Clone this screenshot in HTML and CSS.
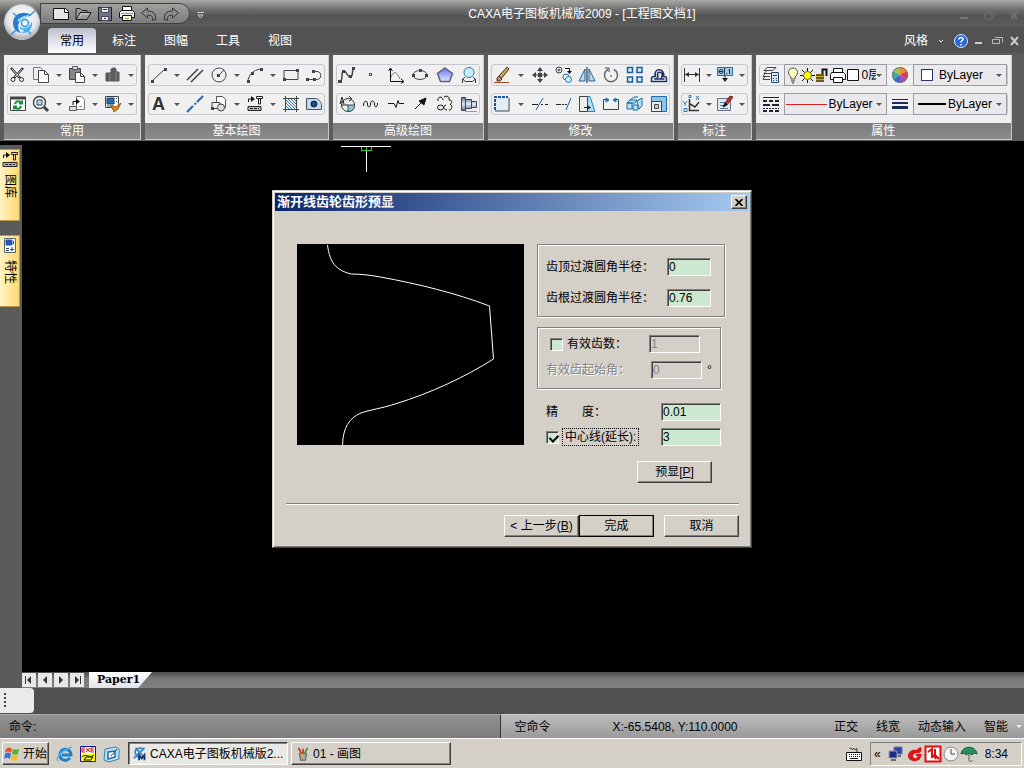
FILE: index.html
```html
<!DOCTYPE html>
<html lang="zh-CN">
  <head>
    <meta charset="UTF-8" />
    <meta name="viewport" content="width=device-width, initial-scale=1.0" />
    <title>CAXA电子图板机械版2009</title>
    <link rel="stylesheet" href="styles.css">
  </head>
  <body>
    <header class="titlebar">
      <button class="app-button" aria-label="菜单">
        <svg width="36" height="36" viewBox="0 0 36 36">
          <defs>
            <radialGradient id="orb" cx=".5" cy=".4" r=".6">
              <stop offset="0" stop-color="#fff" />
              <stop offset=".7" stop-color="#e4e6ea" />
              <stop offset="1" stop-color="#a4a8ae" />
            </radialGradient>
          </defs>
          <circle cx="18" cy="18" r="17.5" fill="url(#orb)" stroke="#c8c8c8" />
          <path d="M9 9l7 6M21 24l6 6M31 7l-6 5M13 25l-6 6" fill="none" stroke="#3a94dc" stroke-width="1.500" />
          <path d="M27 11c-8-5-18-1-18 8 0 5 3 9 8 10-3-3-4-8-1-12 3-3 7-4 11-6z" fill="#2a7ccc" />
          <path d="M25 12c-4 1-8 1-11 5" fill="none" stroke="#9cdcff" stroke-width="2" />
          <path d="M17 29c8 1 12-5 11-12-1 4-4 7-7 7-3 1-5-1-5-3-1 3 1 5 4 5 0 1-1 2-3 3z" fill="#4ab0ee" />
          <circle cx="21" cy="19" r="3.500" fill="#e8f6ff" stroke="#3a94dc" stroke-width="1.500" />
        </svg>
      </button>
      <div class="quick">
        <button class="tool" aria-label="新建"><svg class="icon" viewBox="0 0 20 20"><path d="M2.500 4.500h12l3 3v8h-15z" fill="#e8e8e8" stroke="#111" /><path d="M13.500 4.500v4h4" fill="#fff" stroke="#111" /></svg></button>
        <button class="tool" aria-label="打开"><svg class="icon" viewBox="0 0 20 20"><path d="M3 15V4.500h4l2 2h5v2M3 15.500l4-7h11l-4 7z" fill="#999" stroke="#222" /><path d="M6.500 13l2-3H16" stroke="#ddd" /></svg></button>
        <button class="tool" aria-label="保存"><svg class="icon" viewBox="0 0 20 20"><path d="M3.500 3.500h13v13h-13z" fill="#6c7488" stroke="#222" /><path d="M6.500 3.500h7v5h-7zM6.500 12.500h7v4h-7z" fill="#e8e8ee" stroke="#445" /><path d="M8 5.500h4M9 14.500h2" stroke="#333" /></svg></button>
        <button class="tool" aria-label="打印"><svg class="icon" viewBox="0 0 20 20"><path d="M5.500 7V2.500h9V7" fill="#fff" stroke="#111" /><path d="M4.500 6.500h11l2 2v5h-15v-5z" fill="#eee" stroke="#111" /><path d="M5.500 11.500h9v5h-9z" fill="#fff" stroke="#111" /><path d="M4 9.500h12" stroke="#999" /><path d="M8 14.500h4" stroke="#b90" /></svg></button>
        <button class="tool" aria-label="撤消"><svg class="icon" viewBox="0 0 20 20"><path d="M2.500 9l6-5v3c6 0 9 3 8 9h-3c1-3-1-5-5-5v3z" fill="#8c8c8c" stroke="#333" /></svg></button>
        <button class="tool" aria-label="恢复"><svg class="icon" viewBox="0 0 20 20"><path d="M17.500 9l-6-5v3c-6 0-9 3-8 9h3c-1-3 1-5 5-5v3z" fill="#8c8c8c" stroke="#333" /></svg></button>
      </div>
      <button class="quick-more" aria-label="自定义"><svg class="icon" viewBox="0 0 20 20"><path d="M7 8.500h7M8 11h5l-2.500 3z" stroke="#ccc" /></svg></button>
      <h1 class="title">CAXA电子图板机械版2009 - [工程图文档1]</h1>
      <div class="win-buttons">
        <button aria-label="最小化"><svg class="icon" viewBox="0 0 20 20"><path d="M6 14h8" stroke="#777" stroke-width="2" /></svg></button>
        <button aria-label="还原"><svg class="icon" viewBox="0 0 20 20"><path d="M8 7h7v6M6 9h7v6H6z" stroke="#707070" /></svg></button>
        <button aria-label="关闭"><svg class="icon" viewBox="0 0 20 20"><path d="M7 8l6 7M13 8l-6 7" stroke="#707070" stroke-width="2" /></svg></button>
      </div>
    </header>

    <nav class="tabs">
      <button class="tab tab_active">常用</button>
      <button class="tab">标注</button>
      <button class="tab">图幅</button>
      <button class="tab">工具</button>
      <button class="tab">视图</button>
      <div class="tabs-right">
        <button class="style-menu">风格</button>
        <svg class="icon" viewBox="0 0 20 20"><path d="M7 9l2 2 2-2" stroke="#eee" /></svg>
        <button class="mini" aria-label="帮助"><svg width="16" height="16" viewBox="0 0 16 16"><circle cx="8" cy="8" r="6.500" fill="#2868d8" stroke="#dce8ff" /><path d="M6 6.500c0-3 4.500-2.500 4 0C9.700 7.800 8 7.700 8 9.500M8 11v1.500" fill="none" stroke="#fff" stroke-width="1.600" /></svg></button>
        <button class="mini" aria-label="最小化文档"><svg class="icon" viewBox="0 0 20 20"><path d="M6 12h7" stroke="#ccc" stroke-width="2" /></svg></button>
        <button class="mini" aria-label="还原文档"><svg class="icon" viewBox="0 0 20 20"><path d="M8 6.500h7.500v5M5.500 8.500h7v4h-7z" stroke="#bbb" /></svg></button>
        <button class="mini" aria-label="关闭文档"><svg class="icon" viewBox="0 0 20 20"><path d="M6 6l7 8M13 6l-7 8" stroke="#ccc" stroke-width="2" /></svg></button>
      </div>
    </nav>

    <section class="ribbon">
      <div class="panel panel-common">
        <div class="panel-body">
          <div class="row">
            <button class="tool" aria-label="剪切"><svg class="icon" viewBox="0 0 20 20"><path d="M3 3l9 10M15 3L6 13" stroke="#333" stroke-width="2.500" /><path d="M4 4l7 8M14 4l-7 8" stroke="#ccc" /><circle cx="5" cy="14.500" r="2" stroke="#333" /><circle cx="13.500" cy="14.500" r="2" stroke="#333" /></svg></button>
            <button class="tool" aria-label="复制"><svg class="icon" viewBox="0 0 20 20"><path d="M2.500 2.500h7l2 2v10h-9z" fill="#eee" stroke="#777" /><path d="M7.500 5.500h6l4 4v8h-10z" fill="#fff" stroke="#444" /><path d="M13.500 5.500v4h4" stroke="#444" /></svg></button>
            <button class="drop" aria-label="更多"></button>
            <button class="tool" aria-label="粘贴"><svg class="icon" viewBox="0 0 20 20"><path d="M2.500 3.500h11v11h-11z" fill="#868686" stroke="#444" /><path d="M5.500 1.500h5v3h-5z" fill="#ddd" stroke="#555" /><path d="M8.500 7.500h5l4 4v6h-9z" fill="#fff" stroke="#444" /><path d="M13.500 7.500v4h4" stroke="#444" /></svg></button>
            <button class="drop" aria-label="更多"></button>
            <button class="tool" aria-label="统计"><svg class="icon" viewBox="0 0 20 20"><path d="M3 8h4l1-1V4l2-1h2l1 1v3h3v9H3z" fill="#5c5c5c" stroke="#555" /><path d="M7 8v8M13 7v9" stroke="#888" /></svg></button>
            <button class="drop" aria-label="更多"></button>
          </div>
          <div class="row">
            <button class="tool" aria-label="重生成"><svg class="icon" viewBox="0 0 20 20"><path d="M2.500 3.500h15v13h-15z" fill="#fff" stroke="#444" /><path d="M2 4h16" stroke="#444" stroke-width="3" /><path d="M7 10c1-4 5-3 6-1M14 6.500v3h-3M13 12c-1 4-5 3-6 1M6 15.500v-3h3" stroke="#1c9040" stroke-width="2" /></svg></button>
            <button class="tool" aria-label="缩放"><svg class="icon" viewBox="0 0 20 20"><circle cx="8.500" cy="8.500" r="6" fill="#f4f8ff" stroke="#444" stroke-width="1.500" /><path d="M6 6h5v5H6z" stroke="#345" fill="#bcd8ee" /><path d="M13 13l4 4" stroke-width="3" /></svg></button>
            <button class="drop" aria-label="更多"></button>
            <button class="tool" aria-label="插入"><svg class="icon" viewBox="0 0 20 20"><path d="M9.500 2.500h5l3 3v10h-8z" fill="#fff" stroke="#777" /><path d="M2.500 12.500h7v4h-7z" fill="#ddd" stroke="#555" /><path d="M6 11V7.500h4" stroke="#111" /><path d="M9 4.500l4 3-4 3z" fill="#111" stroke="none" /><path d="M12 12.500h3" stroke="#888" /></svg></button>
            <button class="drop" aria-label="更多"></button>
            <button class="tool" aria-label="特性匹配"><svg class="icon" viewBox="0 0 20 20"><path d="M2.500 2.500h13v11h-13z" fill="#fff" stroke="#445" /><path d="M4 4h7v6H4z" fill="#2868b8" stroke="#245" /><path d="M13 4.500h1M13 7.500h1M4 12h4" stroke="#345" /><path d="M8 11l5 2 5-4-3 6-4 3z" fill="#d98a2a" stroke="#a05a10" /></svg></button>
            <button class="drop" aria-label="更多"></button>
          </div>
        </div>
        <h2 class="panel-name">常用</h2>
      </div>

      <div class="panel panel-draw">
        <div class="panel-body">
          <div class="row">
            <button class="tool" aria-label="直线"><svg class="icon" viewBox="0 0 20 20"><path d="M3 16L16 4" /><path class="dots" d="M2 15h3v3H2zM15 3h3v3h-3z" /></svg></button>
            <button class="drop" aria-label="更多"></button>
            <button class="tool" aria-label="平行线"><svg class="icon" viewBox="0 0 20 20"><path d="M2 15L13 4M6 17L18 5" stroke-width="1.500" /></svg></button>
            <button class="tool" aria-label="圆"><svg class="icon" viewBox="0 0 20 20"><circle cx="10" cy="10" r="7" /><path d="M10 10l5-5" /><path class="dots" d="M8 9h3v3H8z" /></svg></button>
            <button class="drop" aria-label="更多"></button>
            <button class="tool" aria-label="圆弧"><svg class="icon" viewBox="0 0 20 20"><path d="M3 17c0-7 5-12 13-13" /><path class="dots" d="M2 15h3v3H2zM6 7h3v3H6zM15 3h3v3h-3z" /></svg></button>
            <button class="drop" aria-label="更多"></button>
            <button class="tool" aria-label="矩形"><svg class="icon" viewBox="0 0 20 20"><path d="M3 5.500h14v9H3z" /><path class="dots" d="M2 13h3v3H2zM15 4h3v3h-3z" /></svg></button>
            <button class="tool" aria-label="多段线"><svg class="icon" viewBox="0 0 20 20"><path d="M3 14.500h10c5 0 5-8 0-8H9" /><path class="dots" d="M2 13h3v3H2zM9 13h3v3H9zM8 5h3v3H8z" /></svg></button>
          </div>
          <div class="row">
            <button class="tool" aria-label="文字"><svg class="icon" viewBox="0 0 20 20"><text class="letter" x="3" y="16">A</text></svg></button>
            <button class="drop" aria-label="更多"></button>
            <button class="tool" aria-label="中心线"><svg class="icon" viewBox="0 0 20 20"><path d="M2 18l6-6M9.500 10.500l1.500-1.500M12 8l6-6" stroke="#1e6ac0" stroke-width="2" /></svg></button>
            <button class="tool" aria-label="块"><svg class="icon" viewBox="0 0 20 20"><path d="M7.500 2.500h6l3 3v8h-9z" fill="#fff" stroke="#555" /><path d="M3 8.500h8v6H3z" fill="#eee" /><circle cx="12" cy="13.500" r="3.500" fill="#ddd" /><path class="dots" d="M2 13h3v3H2z" /></svg></button>
            <button class="drop" aria-label="更多"></button>
            <button class="tool" aria-label="图库"><svg class="icon" viewBox="0 0 20 20"><path d="M3.500 8V5h4" stroke="#111" /><path d="M6 2l4 3-4 3z" fill="#111" stroke="none" /><path d="M11.500 2.500h6v2h-6zM13.500 5v5h2V5" stroke="#222" /><path d="M3 12.500h13v4H3z" fill="#bbb" stroke="#222" /><path d="M5 14.500h9" stroke-dasharray="3 1" stroke="#222" /></svg></button>
            <button class="drop" aria-label="更多"></button>
            <button class="tool" aria-label="剖面线"><svg class="icon" viewBox="0 0 20 20"><path d="M2 4.500h16M2 15.500h16M4.500 2v16M15.500 2v16" /><path d="M5 12l3 3M5 9l6 6M5 6l9 9M7 5l8 8M10 5l5 5M13 5l2 2" stroke="#2a78b8" /></svg></button>
            <button class="tool" aria-label="填充"><svg class="icon" viewBox="0 0 20 20"><path d="M2.500 4.500h9c3 0 6 4 6 6v5h-15z" fill="#c2daf0" stroke="#456" /><circle cx="10" cy="10" r="3" fill="#1e4a90" stroke="#123" /></svg></button>
          </div>
        </div>
        <h2 class="panel-name">基本绘图</h2>
      </div>

      <div class="panel panel-advanced">
        <div class="panel-body">
          <div class="row">
            <button class="tool" aria-label="样条"><svg class="icon" viewBox="0 0 20 20"><path d="M3 16c4-1 0-10 4-10 3 0 3 6 6 6 4 0 1-7 4-9" stroke-width="1.500" /><path class="dots" d="M1 15h4v3H1zM5 5h3v3H5zM12 10h3v3h-3zM15 2h3v3h-3z" /></svg></button>
            <button class="tool" aria-label="点"><svg class="icon" viewBox="0 0 20 20"><path d="M8.500 8.500h2v2h-2z" /></svg></button>
            <button class="tool" aria-label="公式曲线"><svg class="icon" viewBox="0 0 20 20"><path d="M4.500 4v12.500H17M2.500 6l2-3 2 3M15 14l3 2.500-3 2" stroke="#111" /><path d="M5 12c3-7 6-5 9 2" stroke="#777" /></svg></button>
            <button class="tool" aria-label="椭圆"><svg class="icon" viewBox="0 0 20 20"><ellipse cx="10" cy="10" rx="7" ry="4.500" /><path class="dots" d="M2 9h3v3H2zM15 9h3v3h-3zM9 4h3v3H9z" /></svg></button>
            <button class="tool" aria-label="正多边形"><svg class="icon" viewBox="0 0 20 20"><defs><linearGradient id="penta" x2="0" y2="1"><stop offset="0" stop-color="#6a78f0" /><stop offset="1" stop-color="#dfe4ff" /></linearGradient></defs><path d="M10 3l7.500 5.500-3 8h-9l-3-8z" fill="url(#penta)" stroke="#5a6284" stroke-width="1.500" /></svg></button>
            <button class="tool" aria-label="局部放大"><svg class="icon" viewBox="0 0 20 20"><circle cx="10" cy="7.500" r="5" fill="#c8ecfc" stroke="#2878a8" /><path d="M3.500 18v-4l3 2.500h7l3-2.500v4M6 12l-2 2M14 12l2 2" stroke="#333" /></svg></button>
          </div>
          <div class="row">
            <button class="tool" aria-label="圆形"><svg class="icon" viewBox="0 0 20 20"><circle cx="11" cy="11" r="6.500" stroke="#333" /><path d="M11 11h6.500c0 4-2 6.500-6.500 6.500z" fill="#8ccad4" /><path d="M3 10l2-7 2 7M4 8h3M5 11h6M12 2l3 3-3 2" stroke="#222" /></svg></button>
            <button class="tool" aria-label="波浪线"><svg class="icon" viewBox="0 0 20 20"><path d="M2.500 12c0-6 4-6 4-2s3 4 3 0 4-4 4 0 3 4 3-1" stroke="#111" /></svg></button>
            <button class="tool" aria-label="双折线"><svg class="icon" viewBox="0 0 20 20"><path d="M2 9.500h6l2 4 2-7 1 3h5" stroke="#111" /></svg></button>
            <button class="tool" aria-label="箭头"><svg class="icon" viewBox="0 0 20 20"><path d="M5 15l8-8" stroke="#111" /><path d="M16 4l-2 7-5-4z" fill="#111" stroke="#111" /></svg></button>
            <button class="tool" aria-label="云线"><svg class="icon" viewBox="0 0 20 20"><path d="M3 7c-1-5 5-5 5-1M9 3c3-2 6 0 5 3 4 0 3 4 1 4 3 2 2 6-1 6" stroke="#111" /><ellipse cx="5.500" cy="13.500" rx="3" ry="2.500" stroke="#111" /><path d="M11 11c-4 1-2 5 1 5" stroke="#111" /></svg></button>
            <button class="tool" aria-label="孔/轴"><svg class="icon" viewBox="0 0 20 20"><defs><linearGradient id="shaft" x2="0" y2="1"><stop offset="0" stop-color="#5a6a94" /><stop offset=".5" stop-color="#e6eefa" /><stop offset="1" stop-color="#5a6a94" /></linearGradient></defs><path d="M2.500 3.500h4v13h-4zM6.500 5.500h6v9h-6zM12.500 7.500h5v6h-5z" fill="url(#shaft)" stroke="#445" /><path d="M6 17.500h12" stroke="#99a" /></svg></button>
          </div>
        </div>
        <h2 class="panel-name">高级绘图</h2>
      </div>

      <div class="panel panel-modify">
        <div class="panel-body">
          <div class="row">
            <button class="tool" aria-label="删除"><svg class="icon" viewBox="0 0 20 20"><path d="M7 11l8-9 2 2-8 10z" fill="#dba24c" stroke="#432" /><path d="M5 13l2-2 3 3-2 2H5z" fill="#b88" stroke="#433" /><path d="M2 17.500h15" stroke="#b04020" /></svg></button>
            <button class="drop" aria-label="更多"></button>
            <button class="tool" aria-label="平移"><svg class="icon" viewBox="0 0 20 20"><path d="M10 2l3 4H7zM10 18l3-4H7zM2 10l4-3v6zM18 10l-4-3v6z" fill="#444" stroke="none" /><path d="M10 5v3M10 12v3M5 10h3M12 10h3" /><path class="dots" d="M8 8h4v4H8z" /></svg></button>
            <button class="tool" aria-label="平移复制"><svg class="icon" viewBox="0 0 20 20"><circle cx="5" cy="5" r="3" /><circle cx="5" cy="5" r="1" /><circle cx="12" cy="12" r="3" stroke="#1878b8" /><circle cx="14.500" cy="14.500" r="3" fill="#d8eefa" stroke="#1878b8" /><path d="M11 3.500h4.500v4" stroke="#111" /><path d="M13 6h5l-2.500 3z" fill="#111" stroke="none" /></svg></button>
            <button class="tool" aria-label="镜像"><svg class="icon" viewBox="0 0 20 20"><path d="M8 4v12H2zM12 4v12h6z" fill="#b9dcf2" stroke="#1f5f96" /><path d="M10 2v16" stroke="#111" /></svg></button>
            <button class="tool" aria-label="旋转"><svg class="icon" viewBox="0 0 20 20"><path d="M7 4.500a6.500 6.500 0 1 0 6 0" stroke="#666" stroke-width="1.500" /><path d="M4 3h4v4" stroke="#444" /><path d="M9 11h2" /></svg></button>
            <button class="tool" aria-label="阵列"><svg class="icon" viewBox="0 0 20 20"><path d="M2.500 2.500h5v5h-5zM12 2.500h5v5h-5zM2.500 12h5v5h-5zM12 12h5v5h-5z" fill="#d3ecfb" stroke="#1f5f96" stroke-width="1.500" /></svg></button>
            <button class="tool" aria-label="等距线"><svg class="icon" viewBox="0 0 20 20"><path d="M2.500 16.500v-3c0-2 2-2 3-2h1c-3-9 10-9 8 0h1c2 0 2 1 2 2v3zM5 14h10.500M8 14l1-3c-3-5 6-5 4 0l-1 3" stroke="#1d326b" stroke-width="1.500" /></svg></button>
          </div>
          <div class="row">
            <button class="tool" aria-label="裁剪"><svg class="icon" viewBox="0 0 20 20"><path d="M3 4h13v12H3z" fill="#e4ecf6" stroke="none" /><path d="M3 16V3h13" stroke="#1c50a0" stroke-width="2" stroke-dasharray="3 1" /><path d="M3 17h14V4" stroke="#345" /></svg></button>
            <button class="drop" aria-label="更多"></button>
            <button class="tool" aria-label="打断"><svg class="icon" viewBox="0 0 20 20"><path d="M2 10.500h6M11 10.500h2M15 10.500h3" stroke="#222" /><path d="M6 16l7-12" stroke="#2358ad" /></svg></button>
            <button class="tool" aria-label="延伸"><svg class="icon" viewBox="0 0 20 20"><path d="M2 10.500h5M8 10.500h2M11 10.500h2" stroke="#222" /><path d="M12 16l5-12" stroke="#2358ad" /></svg></button>
            <button class="tool" aria-label="拉伸"><svg class="icon" viewBox="0 0 20 20"><path d="M10 2.500h3l5 15h-8z" fill="#a8dcf4" stroke="#2a88bc" /><path d="M2.500 2.500h8v15h-8z" fill="#eee" stroke="#444" /><path d="M7 13.500h5" stroke="#222" /><path d="M10 11l4 2.500-4 2.500z" fill="#222" stroke="none" /></svg></button>
            <button class="tool" aria-label="过渡"><svg class="icon" viewBox="0 0 20 20"><path d="M7 5.500H2.500v10h15v-10H13" stroke="#345" /><path d="M5 4v4l3-2zM15 4v4l-3-2z" fill="#1878b8" stroke="#1878b8" /></svg></button>
            <button class="tool" aria-label="分解"><svg class="icon" viewBox="0 0 20 20"><path d="M2 9l3-3h7l-2 3zM2 9h5v6H2zM8 11h5v5H8zM12 7l5-3v8l-3 3zM5 6l4-3h4" fill="#b9e3f7" stroke="#186ca4" /></svg></button>
            <button class="tool" aria-label="缩放"><svg class="icon" viewBox="0 0 20 20"><path d="M2.500 2.500h15v15h-15z" fill="#8ac6ec" stroke="#246a9c" /><path d="M2.500 7.500h10v10h-10z" fill="#eee" stroke="#345" /><path d="M5.500 10.500h4v4h-4z" fill="#ccc" /></svg></button>
          </div>
        </div>
        <h2 class="panel-name">修改</h2>
      </div>

      <div class="panel panel-dim">
        <div class="panel-body">
          <div class="row">
            <button class="tool" aria-label="尺寸标注"><svg class="icon" viewBox="0 0 20 20"><path d="M2.500 3v14M17.500 3v14M3 9.500h14" stroke="#333" /><path d="M3 9.500l4-2.500v5zM17 9.500L13 7v5z" fill="#333" stroke="none" /></svg></button>
            <button class="drop" aria-label="更多"></button>
            <button class="tool" aria-label="公差"><svg class="icon" viewBox="0 0 20 20"><path d="M2.500 2.500h15v8h-15z" fill="#a6cbe9" stroke="#38689a" /><path d="M9.500 3v8M10 11v4M4 6.500h4M11.500 8.500h1M14.500 4v5M13.500 5h1" stroke="#234" /><circle cx="6" cy="6.500" r="2" stroke="#234" /><path d="M7 13h6l-3 4z" fill="#123" stroke="none" /></svg></button>
            <button class="drop" aria-label="更多"></button>
          </div>
          <div class="row">
            <button class="tool" aria-label="坐标标注"><svg class="icon" viewBox="0 0 20 20"><path d="M7.500 5v11.500H17M8 10l5 3 4-5" stroke="#333" stroke-width="1.500" /><path d="M1 7l2 3 2-3M3 10v2M14 2l3 4M17 2l-3 4M2 14.500h3v3H2zM7 1.500h2v2H7z" stroke="#287ab8" /></svg></button>
            <button class="drop" aria-label="更多"></button>
            <button class="tool" aria-label="标注编辑"><svg class="icon" viewBox="0 0 20 20"><path d="M2.500 4.500h13v12h-13z" fill="#dceaf6" stroke="#68727e" /><path d="M5 8.500h6M5 11.500h4M5 14.500h8" stroke="#56789a" /><path d="M10 9l5-7 3 1-6 8z" fill="#b03a2e" stroke="#722" /><path d="M10 9l2 2-4 2z" fill="#111" stroke="#111" /></svg></button>
            <button class="drop" aria-label="更多"></button>
          </div>
        </div>
        <h2 class="panel-name">标注</h2>
      </div>

      <div class="panel panel-props">
        <div class="panel-body">
          <div class="row row-props">
            <button class="tool" aria-label="图层"><svg class="icon" viewBox="0 0 20 20"><path d="M6 2.500h9l-3 3H3zM3 8.500l3-3M3 8.500h7M2 11.500l2-3M2 11.500h7M2 14.500h7M2 14.500l2-3" stroke="#444" /><path d="M10.500 7.500h7v10h-7z" fill="#dce6f6" stroke="#246" /><path d="M12 10.500h4M12 13.500h1M15 13.500h1M12 15.500h1M15 15.500h1" stroke="#246" /></svg></button>
            <div class="combo combo-layer">
              <svg class="layer-icons" width="74" height="18" viewBox="0 0 74 18">
                <path d="M5 13v-2C1 8 2 2 7 2s6 6 2 9v2z" fill="#ffffc0" stroke="#555" />
                <path d="M5 15h4M6 17h2" stroke="#333" />
                <path d="M21.500 2v15M14 9.500h15M16 4l11 11M27 4L16 15" stroke="#111" />
                <circle cx="21.500" cy="9.500" r="4" fill="#ff0" stroke="#663" />
                <path d="M36.500 9V3.500h4V10" fill="none" stroke="#111" stroke-width="2" />
                <path d="M30 8h8v8h-8z" fill="#c8a82a" />
                <path d="M30 9h8M30 12h8M30 15h8" stroke="#111" />
                <path d="M47.500 7V2.500h9V7" fill="#fff" stroke="#111" />
                <path d="M45.500 6.500h12l2 2v5h-15v-5z" fill="#fff" stroke="#111" />
                <path d="M47.500 11.500h9v5h-9z" fill="#fff" stroke="#111" />
                <path d="M61.500 3.500h11v11h-11z" fill="#fff" stroke="#111" />
              </svg>
              <select aria-label="图层"><option>0层</option></select>
            </div>
            <button class="tool" aria-label="颜色"><svg class="icon" viewBox="0 0 20 20"><g stroke="none"><path d="M10 10V2a8 8 0 0 1 7 4z" fill="#f08a40" /><path d="M10 10l7-4a8 8 0 0 1 0 8z" fill="#e03848" /><path d="M10 10l7 4a8 8 0 0 1-7 4z" fill="#a050c0" /><path d="M10 10v8a8 8 0 0 1-7-4z" fill="#3868d0" /><path d="M10 10l-7 4a8 8 0 0 1 0-8z" fill="#40a8a0" /><path d="M10 10L3 6a8 8 0 0 1 7-4z" fill="#a0c840" /></g><circle cx="10" cy="10" r="7.500" stroke="#777" /></svg></button>
            <div class="combo">
              <span class="swatch"></span>
              <select aria-label="颜色"><option>ByLayer</option></select>
            </div>
          </div>
          <div class="row row-props">
            <button class="tool" aria-label="线型"><svg class="icon" viewBox="0 0 20 20"><path d="M2 3.500h16" stroke="#223" /><path d="M2 7h16" stroke="#223" stroke-width="2" stroke-dasharray="4 2" /><path d="M2 11h16" stroke="#223" stroke-width="2" stroke-dasharray="7 2" /><path d="M2 14.500h16" stroke="#223" stroke-dasharray="2 1" /><path d="M2 17h16" stroke="#223" stroke-width="2" stroke-dasharray="4 2" /></svg></button>
            <div class="combo">
              <span class="sample sample-red"></span>
              <select aria-label="线型"><option>ByLayer</option></select>
            </div>
            <button class="tool" aria-label="线宽"><svg class="icon" viewBox="0 0 20 20"><path d="M2 5.500h16" stroke="#1c2a58" /><path d="M2 9h16" stroke="#1c2a58" stroke-width="2" /><path d="M2 13.500h16" stroke="#1c2a58" stroke-width="3" /></svg></button>
            <div class="combo">
              <span class="sample"></span>
              <select aria-label="线宽"><option>ByLayer</option></select>
            </div>
          </div>
        </div>
        <h2 class="panel-name">属性</h2>
      </div>
    </section>

    <main class="workspace">
      <aside class="sidebar">
        <button class="side-tab">
          <svg class="icon" viewBox="0 0 20 20"><path d="M3.500 8V5h4" stroke="#111" /><path d="M6 2l4 3-4 3z" fill="#111" stroke="none" /><path d="M11.500 2.500h6v2h-6zM13.500 5v5h2V5" stroke="#222" /><path d="M3 12.500h14v4H3z" fill="#bbb" stroke="#222" /><path d="M5 14.500h10" stroke-dasharray="3 1" stroke="#222" /></svg>
          图库
        </button>
        <button class="side-tab">
          <svg class="icon" viewBox="0 0 20 20"><path d="M4.500 2.500h11v14h-11z" fill="#fff" stroke="#567" /><path d="M6 4h6v5H6z" fill="#2458b0" stroke="#2458b0" /><path d="M6 12.500h3M6 14.500h3M12 11v4M10 13.500h4M13.500 5v3" stroke="#345" /></svg>
          特性
        </button>
      </aside>
      <div class="drawing">
        <div class="canvas">
          <svg class="cursor" width="50" height="26" viewBox="0 0 50 26" shape-rendering="crispEdges">
            <path d="M20.500.5h10v4h-10zM25.500 0v5" fill="none" stroke="#3c3" />
            <path d="M0 .5h50M25.500 5v21" stroke="#fff" />
          </svg>
        </div>
        <div class="sheets">
          <button class="sheet-nav" aria-label="首页"><svg width="14" height="14" viewBox="0 0 14 14"><path d="M3.500 3v8" stroke="#333" /><path d="M9 3v8L5 7z" fill="#333" /></svg></button>
          <button class="sheet-nav" aria-label="上一页"><svg width="14" height="14" viewBox="0 0 14 14"><path d="M9 3v8L5 7z" fill="#333" /></svg></button>
          <button class="sheet-nav" aria-label="下一页"><svg width="14" height="14" viewBox="0 0 14 14"><path d="M5 3v8l4-4z" fill="#333" /></svg></button>
          <button class="sheet-nav" aria-label="末页"><svg width="14" height="14" viewBox="0 0 14 14"><path d="M10.500 3v8" stroke="#333" /><path d="M5 3v8l4-4z" fill="#333" /></svg></button>
          <button class="sheet">Paper1</button>
        </div>
      </div>
    </main>

    <div class="dock"><div class="dock-grip"></div></div>

    <div class="status">
      <div class="command">命令:</div>
      <div class="info">
        <span class="mode">空命令</span>
        <span class="coords">X:-65.5408, Y:110.0000</span>
        <button>正交</button>
        <button>线宽</button>
        <button>动态输入</button>
        <button>智能</button>
        <button class="drop drop-light" aria-label="更多"></button>
      </div>
    </div>

    <footer class="taskbar">
      <button class="task-button start">
        <svg width="17" height="17" viewBox="0 0 17 17"><path d="M2 4c2-2 4-2 6 0L7 8C5 6 3 6 1 8z" fill="#e8502a" /><path d="M9 4c2 1 4 1 6 0l-1 5c-2 1-4 1-6 0z" fill="#58ac30" /><path d="M1 9c2-2 4-2 6 0l-1 5c-2-2-4-2-6 0z" fill="#3a70d8" /><path d="M8 10c2 1 4 1 6 0l-1 5c-2 1-4 1-6 0z" fill="#f4bc28" /></svg>
        开始
      </button>
      <div class="launch">
        <button class="tool" aria-label="浏览器"><svg class="icon" viewBox="0 0 20 20"><path d="M15 14c-5 5-11 1-10-4 1-7 11-6 11 1H7" stroke="#2080c8" stroke-width="3" /><path d="M3 17C0 15 5 7 17 3" stroke="#60b0e4" stroke-width="1.500" /></svg></button>
        <button class="tool" aria-label="程序"><svg class="icon" viewBox="0 0 20 20"><path d="M2.500 2.500h15v15h-15z" fill="#fff" stroke="#119" /><path d="M7 4H4v4h3M4 6h3M8 4l4 4M12 4L8 8M16 4h-3v4h3M13 6h3" stroke="#d11" /><path d="M3 10h14v7H3z" fill="#ff0" stroke="none" /><path d="M4 13c4-4 8 2 12-2M6 16l2-3h7l-2 3z" stroke="#111" /></svg></button>
        <button class="tool" aria-label="显示桌面"><svg class="icon" viewBox="0 0 20 20"><path d="M4 5l11-2 3 2v10l-10 3-5-2z" fill="#b8dcf2" stroke="#3a82b4" /><path d="M7 8l7-1v6l-7 2z" fill="#fff" stroke="#246a9c" stroke-width="1.500" /><path d="M10 12l6-7" stroke="#246" /></svg></button>
      </div>
      <button class="task-button task task_pressed">
        <svg width="16" height="18" viewBox="0 0 18 18"><path d="M14 4C8 0 2 4 4 9c1 4 6 5 9 2M4 2l11 12M14 2L2 14" fill="none" stroke="#3a88c4" stroke-width="2" /><path d="M8 16v-6l3 4 3-4v6" fill="none" stroke="#123a70" stroke-width="2" /></svg>
        CAXA电子图板机械版2...
      </button>
      <button class="task-button task">
        <svg width="16" height="18" viewBox="0 0 18 18"><path d="M5 8h8l-1 8H6z" fill="#9aa8a0" stroke="#555" /><path d="M7 8L4 2M9 8V3" stroke="#c03a2a" stroke-width="2" /><path d="M11 8l3-6" stroke="#5a8a2a" stroke-width="2" /><path d="M8 10l2 4" stroke="#e0b030" stroke-width="2" /></svg>
        01 - 画图
      </button>
      <button class="tool keyboard" aria-label="输入法"><svg class="icon" viewBox="0 0 20 20"><path d="M2.500 8.500h15v8h-15z" fill="#fff" stroke="#111" /><path d="M6 5c1-3 2 2 3 0s2 2 3 0 1 2 1 3" stroke="#111" /><path d="M5 10.500h11M5 12.500h11" stroke="#111" stroke-dasharray="1 1" /><path d="M6 14.500h8" stroke="#111" /></svg></button>
      <div class="tray">
        <span class="more">«</span>
        <svg width="92" height="18" viewBox="0 0 92 18">
          <path d="M7 2h8v7H7z" fill="#2446a8" stroke="#779" />
          <path d="M2 6h8v7H2z" fill="#1a2f80" stroke="#99b" />
          <path d="M4 15h5M11 11h3" stroke="#667" stroke-width="2" />
          <path d="M34 2c-3 1-4 2-4 3-5-1-9 2-9 6 0 5 8 7 12 3l2-5h-6v2h2c-1 3-5 3-5 0 0-2 2-3 5-3 3 0 4-2 3-6z" fill="#d81818" />
          <path d="M38.500 1.500h15v15h-15z" fill="#fff" stroke="#d11" stroke-width="2" />
          <path d="M41 7l4-3v9M48 4v6l4 4M45 9l4 5" fill="none" stroke="#d11" stroke-width="2" />
          <circle cx="64" cy="9" r="7" fill="#f4f4f4" stroke="#888" />
          <path d="M64 4v5h4" fill="none" stroke="#444" />
          <path d="M74 9c1-9 15-9 16 0l-3-1-2 2-3-2-3 2-2-2z" fill="#28905a" stroke="#165c38" />
          <path d="M82 8v7c0 2 3 2 3 0" fill="none" stroke="#555" />
        </svg>
        <time>8:34</time>
      </div>
    </footer>

    <form class="dialog">
      <div class="dialog-title">
        <h2>渐开线齿轮齿形预显</h2>
        <button type="button" class="close" aria-label="关闭"><svg width="8" height="7" viewBox="0 0 8 7"><path d="M.5 0l7 7M7.500 0l-7 7" stroke="#000" stroke-width="1.600" /></svg></button>
      </div>
      <div class="dialog-body">
        <svg class="preview" width="227" height="201" viewBox="0 0 227 201">
          <path d="M30.500 1c1 9 4 17 8 21 4 4 10 7 16 8 8 0 18 1 29 3 38 7 75 16 109 29L196.500 115C168 133 134 149 98 160C86 164 72 166 64 169C52 174 46 184 45.500 201" fill="none" stroke="#fff" />
        </svg>
        <div class="fields">
          <fieldset class="group group-radius">
            <div class="field">
              <label for="top-r">齿顶过渡圆角半径：</label>
              <input id="top-r" class="w44" type="text" value="0" />
            </div>
            <div class="field">
              <label for="root-r">齿根过渡圆角半径：</label>
              <input id="root-r" class="w44" type="text" value="0.76" />
            </div>
          </fieldset>
          <fieldset class="group group-teeth">
            <div class="field">
              <input id="teeth-on" class="check" type="checkbox" />
              <label for="teeth-on">有效齿数：</label>
              <input class="w51" type="text" value="1" aria-label="有效齿数" disabled />
            </div>
            <div class="field">
              <label for="angle" class="disabled">有效齿起始角：</label>
              <input id="angle" class="w51" type="text" value="0" disabled />
              <span class="degree">°</span>
            </div>
          </fieldset>
          <div class="field field-wide">
            <label for="precision">精　　度：</label>
            <input id="precision" class="w60" type="text" value="0.01" />
          </div>
          <div class="field field-wide">
            <input id="center-on" class="check" type="checkbox" checked />
            <label for="center-on" class="focused">中心线(延长):</label>
            <input class="w60" type="text" value="3" aria-label="延长" />
          </div>
          <button type="button" class="btn btn-preview">预显[<u>P</u>]</button>
        </div>
      </div>
      <div class="dialog-buttons">
        <button type="button" class="btn">&lt; 上一步(<u>B</u>)</button>
        <button type="button" class="btn btn_default">完成</button>
        <button type="button" class="btn btn-cancel">取消</button>
      </div>
    </form>
  </body>
</html>
```

FILE: styles.css
```css
* {
  box-sizing: border-box;
}

body {
  margin: 0;
  height: 100vh;
  display: flex;
  flex-direction: column;
  overflow: hidden;
  background: #505050;
  font-family: "Liberation Sans", "Noto Sans CJK SC", sans-serif;
  font-size: 12px;
  line-height: 16px;
}

h1,
h2 {
  margin: 0;
  font-size: 12px;
  font-weight: normal;
}

button {
  margin: 0;
  padding: 0;
  border: 0;
  background: none;
  color: inherit;
  font: inherit;
  white-space: nowrap;
}

svg {
  display: block;
  flex: none;
}

.icon {
  width: 20px;
  height: 20px;
  fill: none;
  stroke: #444;
}

.icon .dots {
  fill: #444;
  stroke: none;
}

.icon .letter {
  fill: #333;
  stroke: none;
  font-size: 18px;
  font-weight: bold;
}

.tool {
  width: 20px;
  height: 20px;
}

.drop {
  width: 10px;
  height: 20px;
  display: flex;
  align-items: center;
  justify-content: center;
}

.drop::before,
.combo::after {
  content: "";
  border: 3px solid transparent;
  border-top-color: #555;
  border-bottom: 0;
}

.drop-light::before {
  border-top-color: #eee;
}

/* title */
.titlebar {
  position: relative;
  height: 27px;
  flex: none;
  display: flex;
  align-items: center;
  padding-left: 40px;
  color: #fff;
  background: linear-gradient(#a8a8a4, #686868 40%, #545454 60%, #5c5c5c);
}

.app-button {
  position: absolute;
  left: 4px;
  top: 4px;
}

.quick {
  display: flex;
  gap: 2px;
  width: 150px;
  height: 21px;
  padding-left: 10px;
  border: 1px solid #404040;
  border-radius: 0 11px 11px 0;
  background: linear-gradient(#a0a0a0, #7c7c7c);
}

.title {
  flex: 1;
  text-align: center;
}

.win-buttons {
  display: flex;
  gap: 5px;
}

/* tabs */
.tabs {
  height: 26px;
  flex: none;
  display: flex;
  gap: 4px;
  padding: 1px 0 0 48px;
  color: #fff;
  background: #525252;
}

.tab {
  width: 48px;
}

.tab_active {
  color: #000;
  border-radius: 4px 4px 0 0;
  background: linear-gradient(#bcc0cc, #d8dae6 40%, #fff);
}

.tabs-right {
  margin-left: auto;
  display: flex;
  align-items: center;
}

.style-menu {
  margin-right: 4px;
}

.mini {
  width: 18px;
  height: 20px;
  display: flex;
  align-items: center;
  justify-content: center;
}

/* ribbon */
.ribbon {
  height: 88px;
  flex: none;
  display: flex;
  gap: 4px;
  padding: 2px 12px 1px 4px;
  background: #5c5c5c;
}

.panel {
  display: flex;
  flex-direction: column;
  background: #f0f0f0;
  border: 1px solid #c8c8c8;
  border-width: 0 1px 1px 0;
}

.panel-common {
  flex: 137 1 0;
}

.panel-draw {
  flex: 184 1 0;
}

.panel-advanced {
  flex: 151 1 0;
}

.panel-modify {
  flex: 186 1 0;
}

.panel-dim {
  flex: 73 1 0;
}

.panel-props {
  flex: 257 1 0;
}

.panel-body {
  flex: 1;
  display: flex;
  flex-direction: column;
  gap: 7px;
  padding: 9px 3px 0;
}

.row {
  height: 22px;
  display: flex;
  justify-content: space-between;
  border: 1px solid #c4c8cc;
  border-radius: 3px;
}

.row-props {
  gap: 3px;
  padding-left: 1px;
}

.panel-name {
  height: 16px;
  text-align: center;
  color: #fff;
  background: linear-gradient(#7c7c7c, #8c8c8c);
}

.combo {
  flex: 94 1 0;
  min-width: 0;
  height: 22px;
  margin: -1px 0;
  padding: 0 4px 0 1px;
  display: flex;
  align-items: center;
  border: 1px solid #999ea6;
  background: #e9e9eb;
}

.combo:nth-child(2) {
  flex-grow: 104;
}

.combo select {
  flex: 1;
  min-width: 0;
  padding: 0 0 0 2px;
  border: 0;
  appearance: none;
  background: none;
  color: #000;
  font: inherit;
}

.swatch {
  width: 12px;
  height: 12px;
  margin: 0 4px 0 6px;
  border: 1px solid #24346c;
  background: #fff;
}

.sample {
  width: 28px;
  margin-left: 3px;
  border-top: 2px solid #000;
}

.sample-red {
  width: 41px;
  margin-left: 0;
  border-top: 1px solid #d22;
}

/* workspace */
.workspace {
  flex: 1;
  min-height: 0;
  display: flex;
}

.sidebar {
  width: 22px;
  flex: none;
  padding-top: 4px;
  border-top: 4px solid #000;
  background: #5a5a5a;
}

.side-tab {
  width: 20px;
  height: 72px;
  margin-bottom: 14px;
  display: flex;
  align-items: center;
  gap: 4px;
  writing-mode: vertical-rl;
  text-orientation: sideways;
  border: 1px solid #b89848;
  border-left: 0;
  background: linear-gradient(to right, #fff3c4, #ffd970);
}

.drawing {
  flex: 1;
  display: flex;
  flex-direction: column;
}

.canvas {
  position: relative;
  flex: 1;
  background: #000;
}

.cursor {
  position: absolute;
  left: 319px;
  top: 5px;
}

.sheets {
  height: 16px;
  display: flex;
  gap: 2px;
  align-items: center;
  background: linear-gradient(#4c4c4c, #787878 40%, #808080);
}

.sheet-nav {
  width: 14px;
  height: 14px;
  background: #e8e8e8;
}

.sheet {
  width: 63px;
  height: 16px;
  margin-left: 3px;
  padding-left: 8px;
  text-align: left;
  font: bold 11px/16px "DejaVu Serif", serif;
  color: #000;
  background: linear-gradient(#fff, #e0e4ea);
  clip-path: polygon(0 0, 100% 0, 78% 100%, 0 100%);
}

.dock {
  height: 26px;
  flex: none;
  background: #505050;
}

.dock-grip {
  width: 34px;
  height: 25px;
  padding: 5px 4px;
  border-radius: 0 4px 4px 0;
  background: #eaeaea;
}

.dock-grip::before {
  content: "";
  display: block;
  height: 14px;
  border-left: 2px dotted #444;
}

/* status */
.status {
  height: 24px;
  flex: none;
  display: flex;
  line-height: 24px;
  color: #000;
}

.command {
  flex: 491 1 0;
  padding-left: 9px;
  border-top: 1px solid #aaa;
  border-right: 1px solid #333;
  background: linear-gradient(#929292, #7c7c7c);
}

.info {
  flex: 510 1 0;
  display: flex;
  align-items: center;
  gap: 18px;
  padding-left: 14px;
  border-top: 1px solid #ccc;
  background: linear-gradient(#bcbcbc, #999);
}

.coords {
  flex: 1;
  padding-left: 44px;
}

.info .drop {
  margin-left: -12px;
}

/* taskbar */
.taskbar {
  height: 30px;
  flex: none;
  display: flex;
  align-items: center;
  gap: 3px;
  padding: 0 2px;
  border-top: 1px solid #fff;
  background: #d4d0c8;
}

.task-button {
  height: 23px;
  display: flex;
  align-items: center;
  gap: 2px;
  padding: 0 3px;
  border: 1px solid;
  border-color: #fff #404040 #404040 #fff;
  box-shadow: inset -1px -1px #808080;
}

.start {
  padding: 0 1px;
}

.launch {
  display: flex;
  gap: 3px;
  padding: 0 4px 0 3px;
}

.task {
  width: 160px;
}

.task_pressed {
  border-color: #404040 #fff #fff #404040;
  box-shadow: inset 1px 1px #808080;
  background: #ebe9e4;
}

.keyboard {
  margin-left: auto;
}

.tray {
  width: 152px;
  height: 24px;
  margin-left: 3px;
  display: flex;
  align-items: center;
  gap: 6px;
  padding: 0 3px;
  border: 1px solid;
  border-color: #808080 #fff #fff #808080;
}

/* dialog */
.dialog {
  position: absolute;
  left: 272px;
  top: 190px;
  width: 480px;
  padding: 2px;
  color: #000;
  border: 1px solid;
  border-color: #d4d0c8 #404040 #404040 #d4d0c8;
  box-shadow: inset 1px 1px #fff, inset -1px -1px #808080;
  background: #d4d0c8;
}

.dialog-title {
  height: 18px;
  display: flex;
  align-items: center;
  padding: 0 2px;
  color: #fff;
  background: linear-gradient(to right, #0a246a, #a6caf0);
}

.dialog-title h2 {
  flex: 1;
  font-size: 13px;
  font-weight: bold;
}

.close,
.btn {
  border: 1px solid;
  border-color: #fff #404040 #404040 #fff;
  box-shadow: inset -1px -1px #808080;
  background: #d4d0c8;
}

.close {
  width: 16px;
  height: 14px;
  display: flex;
  align-items: center;
  justify-content: center;
}

.dialog-body {
  display: flex;
  align-items: flex-start;
  gap: 13px;
  padding: 33px 24px 20px 22px;
}

.preview {
  background: #000;
}

.fields {
  flex: 1;
  display: flex;
  flex-direction: column;
}

.group {
  margin: 0 0 10px;
  padding: 0 13px 0 8px;
  border: 1px solid #808080;
  box-shadow: 1px 1px #fff, inset 1px 1px #fff;
}

.group-radius {
  height: 73px;
  padding-top: 13px;
}

.group-radius .field {
  margin-bottom: 13px;
}

.group-teeth {
  height: 62px;
  margin-right: 4px;
  margin-bottom: 14px;
  padding-top: 7px;
  padding-right: 4px;
}

.group-teeth .field {
  margin-bottom: 8px;
  padding-right: 16px;
}

.group-teeth .field + .field {
  padding-right: 0;
}

.field {
  height: 18px;
  display: flex;
  align-items: center;
}

.field label {
  flex: none;
}

.field-wide {
  padding: 0 4px 0 9px;
  margin-bottom: 7px;
}

input[type="text"] {
  height: 18px;
  margin: 0 0 0 auto;
  padding: 0 1px;
  border: 1px solid;
  border-color: #808080 #fff #fff #808080;
  box-shadow: inset 1px 1px #404040;
  background: #cce8cf;
  color: #000;
  font: inherit;
}

input[type="text"]:disabled {
  background: #d4d0c8;
  color: #808080;
}

.w44 {
  width: 44px;
}

.w51 {
  width: 51px;
}

.w60 {
  width: 60px;
}

.check {
  width: 13px;
  height: 13px;
  margin: 0 4px 0 0;
  flex: none;
  appearance: none;
  border: 1px solid;
  border-color: #808080 #fff #fff #808080;
  box-shadow: inset 1px 1px #404040;
  background: #cce8cf;
}

.group-teeth .check {
  margin-left: 4px;
}

.check:checked::before {
  content: "";
  display: block;
  width: 4px;
  height: 7px;
  margin: 1px 0 0 4px;
  border: solid #000;
  border-width: 0 2px 2px 0;
  transform: rotate(45deg);
}

.disabled {
  color: #808080;
  text-shadow: 1px 1px #fff;
}

.focused {
  padding: 0 2px;
  outline: 1px dotted #000;
}

.degree {
  width: 14px;
  padding-left: 5px;
}

.btn {
  width: 75px;
  height: 22px;
}

.btn-preview {
  margin: 8px 13px 0 auto;
}

.dialog-buttons {
  display: flex;
  justify-content: flex-end;
  margin: 0 10px 0 11px;
  padding: 11px 0 8px;
  border-top: 1px solid #808080;
  box-shadow: inset 0 1px #fff;
}

.btn_default {
  outline: 1px solid #000;
  outline-offset: -1px;
}

.btn-cancel {
  margin-left: 10px;
}
```
